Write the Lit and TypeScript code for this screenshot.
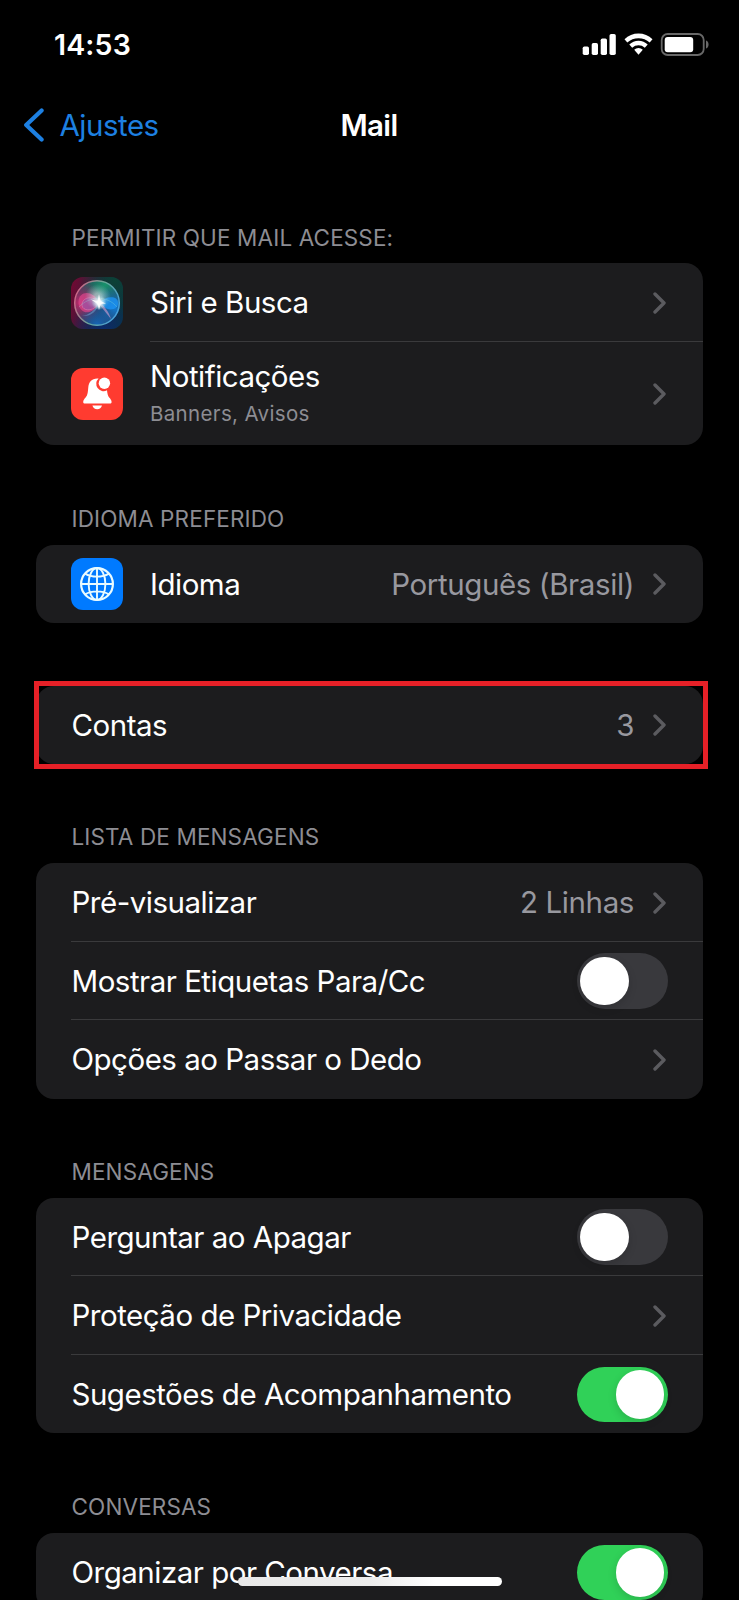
import { LitElement, html, svg, css, nothing } from "lit";
import { customElement, property } from "lit/decorators.js";
import { classMap } from "lit/directives/class-map.js";

type Row = {
  label: string;
  detail?: string;
  value?: string;
  icon?: "siri" | "bell" | "globe";
  toggle?: boolean;
};
type Section = { title?: string; rows: Row[]; highlight?: boolean };

const SECTIONS: Section[] = [
  {
    title: "PERMITIR QUE MAIL ACESSE:",
    rows: [
      { label: "Siri e Busca", icon: "siri" },
      { label: "Notificações", detail: "Banners, Avisos", icon: "bell" },
    ],
  },
  {
    title: "IDIOMA PREFERIDO",
    rows: [{ label: "Idioma", value: "Português (Brasil)", icon: "globe" }],
  },
  { highlight: true, rows: [{ label: "Contas", value: "3" }] },
  {
    title: "LISTA DE MENSAGENS",
    rows: [
      { label: "Pré-visualizar", value: "2 Linhas" },
      { label: "Mostrar Etiquetas Para/Cc", toggle: false },
      { label: "Opções ao Passar o Dedo" },
    ],
  },
  {
    title: "MENSAGENS",
    rows: [
      { label: "Perguntar ao Apagar", toggle: false },
      { label: "Proteção de Privacidade" },
      { label: "Sugestões de Acompanhamento", toggle: true },
    ],
  },
  {
    title: "CONVERSAS",
    rows: [{ label: "Organizar por Conversa", toggle: true }],
  },
];

const siri = svg`
  <defs>
    <clipPath id="tile"><rect width="52" height="52" rx="12"/></clipPath>
    <clipPath id="orb"><circle cx="26" cy="26" r="22.5"/></clipPath>
    <linearGradient id="bg" x1="0" y1="0.3" x2="1" y2="0.55">
      <stop offset="0" stop-color="#6e0a33"/><stop offset="0.5" stop-color="#2b1f3c"/><stop offset="1" stop-color="#0a3344"/>
    </linearGradient>
    <radialGradient id="bgGreen" cx="0.85" cy="0.05" r="0.7"><stop offset="0" stop-color="#0a4236"/><stop offset="1" stop-color="#0a4236" stop-opacity="0"/></radialGradient>
    <radialGradient id="bgBlue" cx="0.6" cy="1" r="0.6"><stop offset="0" stop-color="#0a2b6b"/><stop offset="1" stop-color="#0a2b6b" stop-opacity="0"/></radialGradient>
    <radialGradient id="green" cx="0.65" cy="0.15" r="0.5"><stop offset="0" stop-color="#17926c"/><stop offset="1" stop-color="#17926c" stop-opacity="0"/></radialGradient>
    <radialGradient id="pink" cx="0.15" cy="0.5" r="0.45"><stop offset="0" stop-color="#b52a68"/><stop offset="1" stop-color="#b02a6c" stop-opacity="0"/></radialGradient>
    <radialGradient id="blue" cx="0.85" cy="0.6" r="0.45"><stop offset="0" stop-color="#1478cc"/><stop offset="1" stop-color="#1264b4" stop-opacity="0"/></radialGradient>
    <radialGradient id="deep" cx="0.5" cy="0.92" r="0.4"><stop offset="0" stop-color="#1566b8"/><stop offset="1" stop-color="#155fae" stop-opacity="0"/></radialGradient>
    <radialGradient id="glow"><stop offset="0" stop-color="#fff"/><stop offset="0.3" stop-color="#f2fdff" stop-opacity="0.9"/><stop offset="1" stop-color="#9fdce0" stop-opacity="0"/></radialGradient>
    <linearGradient id="ring" x1="0" y1="0.3" x2="1" y2="0.7"><stop offset="0" stop-color="#dc6a8c"/><stop offset="0.5" stop-color="#6fae9c"/><stop offset="1" stop-color="#49a8ea"/></linearGradient>
  </defs>
  <g clip-path="url(#tile)">
    <rect width="52" height="52" fill="url(#bg)"/>
    <rect width="52" height="52" fill="url(#bgGreen)"/>
    <rect width="52" height="52" fill="url(#bgBlue)"/>
    <g clip-path="url(#orb)">
      <rect width="52" height="52" fill="#2a3c54"/>
      <rect width="52" height="52" fill="url(#green)"/>
      <rect width="52" height="52" fill="url(#pink)"/>
      <rect width="52" height="52" fill="url(#blue)"/>
      <rect width="52" height="52" fill="url(#deep)"/>
      <path d="M28 26C23 13 8 13 7.500 24.500S20 41 28 26Z" fill="#e0458c" fill-opacity=".7"/>
      <path d="M28 26C22 18 12 20 11 27S22 36 28 26Z" fill="#8c5ab4" fill-opacity=".5" stroke="#f08ab5" stroke-opacity=".6" stroke-width=".8"/>
      <path d="M28 26C34 19 47 18 47 26S35 35 28 26Z" fill="#1c96f8" fill-opacity=".75"/>
      <path d="M27 27C23 34 18 38 11 39C20 40 25 34 28 28Z" fill="#7fc4f0" fill-opacity=".4"/>
      <path d="M28 27L40 42C38 35 33 29 29 25Z" fill="#d8a0d0" fill-opacity=".6"/>
      <path d="M8 30C18 19 36 18 46 30" fill="none" stroke="#8fe0d8" stroke-opacity=".3"/>
      <circle cx="27" cy="20" r="13" fill="url(#glow)" opacity=".55"/>
      <circle cx="28" cy="25.500" r="7.500" fill="url(#glow)"/>
      <path d="M28 17L29.500 24L35 26.500L29.700 27L28 33L26.500 27L20 22.500L26.500 24Z" fill="#fff" fill-opacity=".85"/>
    </g>
    <circle cx="26" cy="26" r="22.300" fill="none" stroke="url(#ring)" stroke-width="1.500" stroke-opacity=".9"/>
  </g>`;

const bell = svg`
  <rect width="52" height="52" rx="12" fill="#ff3b30"/>
  <path d="M26.300 10.400C20.500 10.400 17.800 14.300 17.300 19.200C16.900 23.400 16.900 26.700 14.600 29.600C13.300 31.200 12.200 32.200 12.200 34C12.200 35.100 12.900 35.600 14 35.600H38.800C39.900 35.600 40.600 35.100 40.600 34C40.600 32.200 39.500 31.200 38.200 29.600C36.900 27.900 36.300 25.400 36 22.300A7.300 7.300 0 0 1 27.600 10.500Z" fill="#fff"/>
  <circle cx="33.400" cy="15.200" r="5.700" fill="#fff"/>
  <path d="M21.400 37.500H31C30.400 39.900 28.600 41.300 26.200 41.300S22 39.900 21.400 37.500Z" fill="#fff"/>`;

const globe = svg`
  <rect width="52" height="52" rx="12" fill="#007aff"/>
  <g fill="none" stroke="#e9fbff" stroke-width="1.900">
    <circle cx="26" cy="26" r="15.900" stroke-width="2.200"/>
    <ellipse cx="26" cy="26" rx="8.400" ry="16"/>
    <path d="M26 10V42M10 26H42M14.200 15.600C20.600 19.600 31.400 19.600 37.800 15.600M14.200 36.400C20.600 32.400 31.400 32.400 37.800 36.400"/>
  </g>`;

const ICONS = { siri, bell, globe };

@customElement("ios-toggle")
class IosToggle extends LitElement {
  @property({ type: Boolean }) on = false;
  static styles = css`
    :host { display: block; flex: none; }
    .track {
      box-sizing: border-box; display: flex; width: 91px; height: 55.500px; padding: 3.500px;
      border-radius: 28px; background: #39393d;
    }
    .on { background: #30d158; justify-content: flex-end; }
    .knob {
      width: 48.500px; height: 48.500px; border-radius: 50%; background: #fff;
      box-shadow: 0 3px 8px rgba(0, 0, 0, 0.15);
    }
  `;
  render() {
    return html`<div class=${classMap({ track: true, on: this.on })}><div class="knob"></div></div>`;
  }
}

@customElement("settings-row")
class SettingsRow extends LitElement {
  @property({ attribute: false }) row!: Row;
  @property({ type: Boolean }) last = false;
  static styles = css`
    :host { display: block; }
    .row { display: flex; padding-left: 35px; height: 78.500px; }
    .row.last { height: 78.300px; }
    .row.tall { height: 103.500px; }
    .icon { flex: none; align-self: center; width: 52px; height: 52px; margin: 0.800px 26.500px 0 0; }
    .body {
      flex: 1; display: flex; align-items: center; box-sizing: border-box;
      padding-right: 35.500px; border-bottom: 1px solid #3a3a3c;
    }
    .last .body { border-bottom: 0; }
    .text { flex: 1; display: flex; flex-direction: column; white-space: nowrap; padding-left: 0.500px; }
    .label { font-size: 29.500px; line-height: 36px; letter-spacing: -0.500px; color: #fff; }
    .detail { font-size: 20.500px; line-height: 26px; margin-top: 7px; letter-spacing: 0.350px; color: #8d8d93; }
    .tall .text { padding-bottom: 2px; }
    .value { font-size: 29.500px; line-height: 36px; letter-spacing: -0.400px; color: #98989f; margin-right: 19px; white-space: nowrap; }
    .chev { flex: none; width: 13px; height: 22px; margin: 1px 1.500px 0 0; }
    ios-toggle { margin-top: 1px; }
  `;
  render() {
    const r = this.row;
    return html`
      <div class=${classMap({ row: true, last: this.last, tall: !!r.detail })}>
        ${r.icon ? html`<svg class="icon" viewBox="0 0 52 52">${ICONS[r.icon]}</svg>` : nothing}
        <div class="body">
          <div class="text">
            <span class="label">${r.label}</span>
            ${r.detail ? html`<span class="detail">${r.detail}</span>` : nothing}
          </div>
          ${r.value ? html`<span class="value">${r.value}</span>` : nothing}
          ${r.toggle === undefined
            ? html`<svg class="chev" viewBox="0 0 13 22">
                <path d="M2 2L11 11L2 20" fill="none" stroke="#5b5b5f" stroke-width="3.400" stroke-linecap="round" stroke-linejoin="round"/>
              </svg>`
            : html`<ios-toggle ?on=${r.toggle}></ios-toggle>`}
        </div>
      </div>`;
  }
}

@customElement("app-root")
class AppRoot extends LitElement {
  static styles = css`
    :host {
      display: block; position: relative; width: 739px; height: 1600px; overflow: hidden;
      background: #000; color: #fff; font-family: Inter, "Liberation Sans", sans-serif;
    }
    .status {
      display: flex; align-items: center; justify-content: space-between;
      height: 88px; box-sizing: border-box; padding: 0 29px 0 54px;
    }
    .time { font-size: 28.500px; font-weight: 600; letter-spacing: 0.150px; line-height: 34px; padding-top: 2px; }
    .indicators { width: 128px; height: 24px; }
    .nav {
      display: grid; grid-template-columns: 1fr auto 1fr; align-items: center;
      height: 76px; box-sizing: border-box; padding: 0 24px 1.500px;
    }
    .back { display: flex; align-items: center; gap: 15.500px; color: #1d80e2; font-size: 29.500px; letter-spacing: -0.500px; }
    .back svg { width: 20px; height: 34px; }
    .title { font-size: 29.500px; font-weight: 600; letter-spacing: -0.600px; padding-right: 1px; }
    .list { display: flex; flex-direction: column; padding: 0 36px; }
    .section { display: flex; flex-direction: column; }
    .heading {
      box-sizing: border-box; height: 99.400px; padding: 0 35.500px 11.800px; display: flex; align-items: flex-end;
      font-size: 22.500px; line-height: 28px; letter-spacing: 0.130px; color: #8d8d93; white-space: nowrap;
    }
    .card { background: #1c1c1e; border-radius: 18px; }
    .highlight { position: relative; padding-top: 62.500px; }
    .mark {
      position: absolute; left: -2px; right: -5px; bottom: -5px; height: 88px;
      box-sizing: border-box; border: 5px solid #e62027;
    }
    .home {
      position: absolute; left: 238px; top: 1576.500px; width: 264px; height: 9px;
      border-radius: 5px; background: linear-gradient(90deg, #e8e8e8, #ececec 50%, #fff 75%);
    }
  `;
  render() {
    return html`
      <div class="status">
        <span class="time">14:53</span>
        <svg class="indicators" viewBox="0 0 128 24">
          <g fill="#fff">
            <rect x="0.700" y="14.500" width="6.300" height="8.500" rx="1.700"/>
            <rect x="9.700" y="11" width="6.300" height="12" rx="1.700"/>
            <rect x="18.700" y="6.500" width="6.300" height="16.500" rx="1.700"/>
            <rect x="27.500" y="2" width="6.300" height="21" rx="1.700"/>
            <path d="M42.500 7.300A20 20 0 0 1 70.500 7.300L67.700 10.600A16.500 16.500 0 0 0 45.300 10.600Z"/>
            <path d="M47.300 12.500A13 13 0 0 1 65.700 12.500L62.800 15.700A9.300 9.300 0 0 0 50.200 15.700Z"/>
            <path d="M52.200 17.800A6.300 6.300 0 0 1 60.800 17.800L56.500 22.700Z"/>
            <rect x="82.700" y="5" width="28.500" height="15.200" rx="3"/>
          </g>
          <rect x="79.700" y="2" width="42" height="21" rx="6" fill="none" stroke="#686868" stroke-width="1.800"/>
          <path d="M124 8.500C127.400 9.600 127.400 15.400 124 16.500Z" fill="#686868"/>
        </svg>
      </div>
      <div class="nav">
        <div class="back">
          <svg viewBox="0 0 20 34"><path d="M17.600 2.400L2.200 17L17.600 31.600" fill="none" stroke="#1d80e2" stroke-width="4.200" stroke-linecap="round" stroke-linejoin="round"/></svg>
          <span>Ajustes</span>
        </div>
        <div class="title">Mail</div>
      </div>
      <div class="list">
        ${SECTIONS.map(
          (s) => html`
            <div class=${classMap({ section: true, highlight: !!s.highlight })}>
              ${s.title ? html`<div class="heading">${s.title}</div>` : nothing}
              <div class="card">
                ${s.rows.map((r, i) => html`<settings-row .row=${r} ?last=${i === s.rows.length - 1}></settings-row>`)}
              </div>
              ${s.highlight ? html`<div class="mark"></div>` : nothing}
            </div>`
        )}
      </div>
      <div class="home"></div>`;
  }
}
